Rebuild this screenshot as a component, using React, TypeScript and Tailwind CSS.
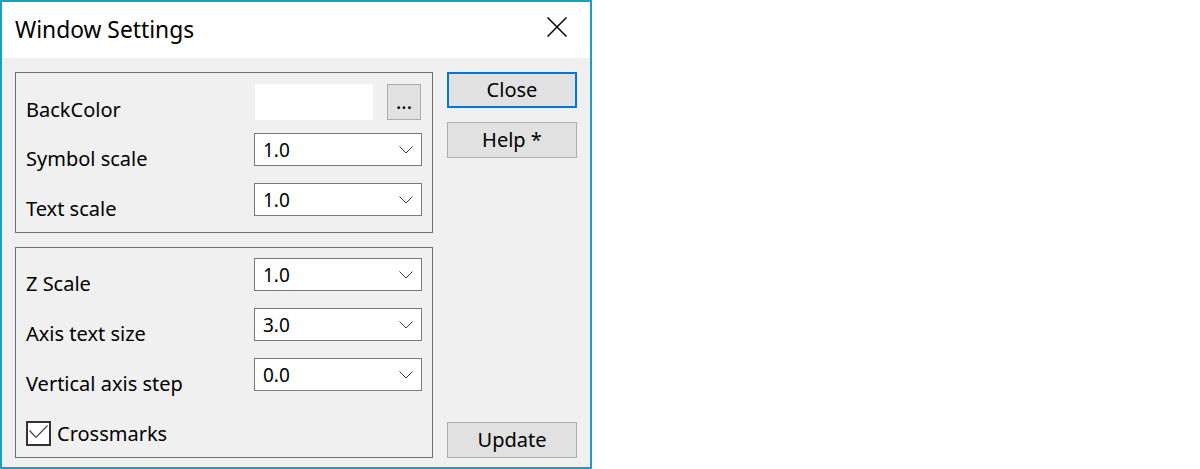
import React from "react";

function Chevron() {
  return (
    <svg width="14" height="8" viewBox="0 0 14 8" className="block">
      <polyline points="0.5,0.5 7,7 13.5,0.5" fill="none" stroke="#3c3c3c" strokeWidth="1" />
    </svg>
  );
}

function Combo({ value }: { value: string }) {
  return (
    <div className="w-[168px] h-[33px] border border-[#7a7a7a] bg-white flex items-center pl-[8px] pr-[8px] pt-[2px]">
      <span className="text-[19px] leading-[19px] flex-1">{value}</span>
      <div className="-mt-[2px]">
        <Chevron />
      </div>
    </div>
  );
}

function Label({ text }: { text: string }) {
  return <div className="w-[228px] shrink-0 pt-[16px] text-[20px] leading-[20px]">{text}</div>;
}

function Button({ text, focused }: { text: string; focused?: boolean }) {
  return (
    <div
      className={
        focused
          ? "h-[36px] w-[130px] border-2 border-[#0078d7] bg-[#e1e1e1] flex items-center justify-center text-[20px] leading-[20px]"
          : "h-[36px] w-[130px] border border-[#adadad] bg-[#e1e1e1] flex items-center justify-center text-[20px] leading-[20px]"
      }
    >
      {text}
    </div>
  );
}

export default function App() {
  return (
    <div className="w-[592px] h-[469px] border-2 border-[#1a9fc3] flex flex-col font-['Noto_Sans',sans-serif] text-black bg-[#f0f0f0]">
      <div className="h-[56px] bg-white flex items-start pl-[13px] pr-[23px] shrink-0">
        <span className="text-[22.8px] leading-[22px] mt-[17px]">Window Settings</span>
        <svg width="20" height="20" viewBox="0 0 20 20" className="ml-auto mt-[15px]">
          <line x1="0.5" y1="0.5" x2="19.5" y2="19.5" stroke="#000" strokeWidth="1.5" />
          <line x1="19.5" y1="0.5" x2="0.5" y2="19.5" stroke="#000" strokeWidth="1.5" />
        </svg>
      </div>
      <div className="flex-1 flex items-start pl-[13px] pt-[14px]">
        <div className="w-[418px] flex flex-col gap-[14px]">
          <div className="h-[161px] border border-[#707070] pl-[10px] pt-[11px] flex flex-col">
            <div className="flex items-start h-[49px]">
              <Label text="BackColor" />
              <div className="ml-[1px] w-[118px] h-[36px] bg-white" />
              <div className="ml-[14px] w-[34px] h-[36px] border border-[#adadad] bg-[#e1e1e1] flex items-center justify-center text-[20px] leading-[20px]">
                ...
              </div>
            </div>
            <div className="flex items-start h-[50px]">
              <Label text="Symbol scale" />
              <Combo value="1.0" />
            </div>
            <div className="flex items-start h-[33px]">
              <Label text="Text scale" />
              <Combo value="1.0" />
            </div>
          </div>
          <div className="h-[211px] border border-[#707070] pl-[10px] pt-[10px] flex flex-col">
            <div className="flex items-start h-[50px]">
              <Label text="Z Scale" />
              <Combo value="1.0" />
            </div>
            <div className="flex items-start h-[50px]">
              <Label text="Axis text size" />
              <Combo value="3.0" />
            </div>
            <div className="flex items-start h-[63px]">
              <Label text="Vertical axis step" />
              <Combo value="0.0" />
            </div>
            <div className="flex items-center h-[25px]">
              <div className="w-[25px] h-[25px] border-2 border-[#333333] bg-white">
                <svg width="21" height="21" viewBox="0 0 21 21" className="block">
                  <polyline points="1.5,7.5 8,14.5 19.5,2.5" fill="none" stroke="#444" strokeWidth="1.2" />
                </svg>
              </div>
              <span className="ml-[6px] text-[20px] leading-[20px]">Crossmarks</span>
            </div>
          </div>
        </div>
        <div className="ml-[14px] w-[130px] h-[386px] flex flex-col">
          <Button text="Close" focused />
          <div className="mt-[14px]">
            <Button text="Help *" />
          </div>
          <div className="mt-auto">
            <Button text="Update" />
          </div>
        </div>
      </div>
    </div>
  );
}
